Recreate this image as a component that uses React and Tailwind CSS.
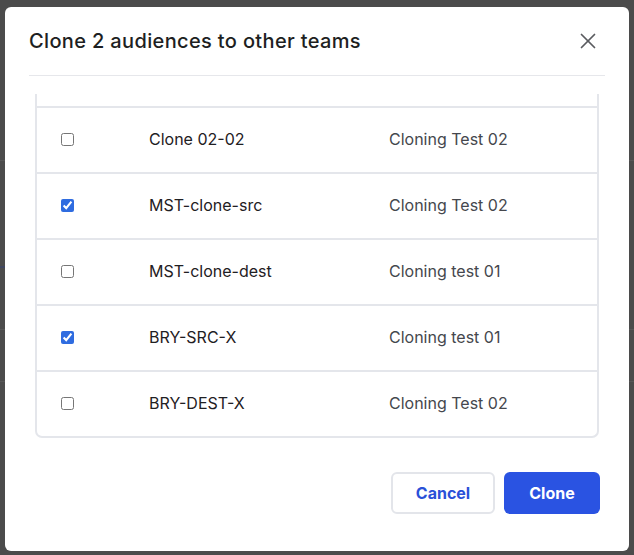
import React from "react";
import { X } from "lucide-react";

const rows = [
  { name: "", team: "", checked: false, ghost: true },
  { name: "Clone 02-02", team: "Cloning Test 02", checked: false },
  { name: "MST-clone-src", team: "Cloning Test 02", checked: true },
  { name: "MST-clone-dest", team: "Cloning test 01", checked: false },
  { name: "BRY-SRC-X", team: "Cloning test 01", checked: true },
  { name: "BRY-DEST-X", team: "Cloning Test 02", checked: false },
];

export default function App() {
  return (
    <div
      className="relative w-[634px] h-[555px] overflow-hidden bg-[#4b4b4b]"
      style={{ fontFamily: "Inter, 'Noto Sans', sans-serif" }}
    >
      {/* faint page behind overlay */}
      <div className="flex flex-col pt-[160px]">
        <div className="border-b border-[#575757]" />
        <div className="h-[107px] border-b-2 border-[#3f4660] w-[20px]" />
        <div className="h-[62px] border-b border-[#575757]" />
        <div className="h-[52px] border-b border-[#575757]" />
      </div>

      <div className="absolute left-[5px] top-[7px] w-[624px] h-[544px] bg-white rounded-[6px] flex flex-col">
        <div className="mx-6 h-[69px] border-b border-[#e6e7eb] flex items-center justify-between">
          <h2 className="text-[20px] font-medium tracking-[0.35px] text-[#1e1f22]">
            Clone 2 audiences to other teams
          </h2>
          <button className="mr-[4px] text-[#5a5b5f]">
            <X size={26} strokeWidth={1.6} />
          </button>
        </div>

        <div className="px-[30px] pt-[18px]">
          <div className="border-2 border-t-0 border-[#e4e6eb] rounded-b-[7px] overflow-hidden h-[344px]">
            {rows.map((r, i) => (
              <div
                key={i}
                className={
                  "flex items-center h-[66px] pb-[2px] text-[16px] " +
                  (i === 0 ? "-mt-[54px]" : "border-t-2 border-[#e4e6eb]")
                }
              >
                <div className="w-[112px] pl-[24px] flex items-center">
                  {!r.ghost && (
                    <input
                      type="checkbox"
                      defaultChecked={r.checked}
                      className="w-[13px] h-[13px] m-0 accent-[#2f6ce0]"
                    />
                  )}
                </div>
                <div className="w-[240px] text-[#1f2023]">{r.name}</div>
                <div className="text-[#45474d]">{r.team}</div>
              </div>
            ))}
          </div>

          <div className="flex justify-end gap-[9px] mt-[34px] -mr-[1px]">
            <button className="w-[104px] h-[42px] border-2 border-[#e3e5ea] rounded-[6px] text-[#2a50d8] font-bold text-[16px]">
              Cancel
            </button>
            <button className="w-[96px] h-[42px] bg-[#2a53e2] rounded-[6px] text-white font-bold text-[16px]">
              Clone
            </button>
          </div>
        </div>
      </div>
    </div>
  );
}
